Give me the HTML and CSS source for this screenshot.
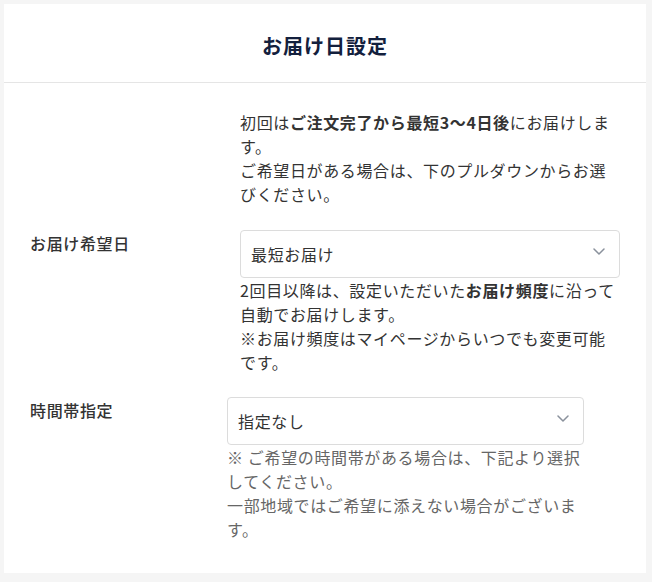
FILE: index.html
```html
<!DOCTYPE html>
<html lang="ja">
<head>
<meta charset="utf-8">
<title>お届け日設定</title>
<link rel="stylesheet" href="styles.css">
</head>
<body>
<div class="card">
  <header class="card-header">
    <h1 class="title">お届け日設定</h1>
  </header>
  <div class="card-body">
    <section class="field field-date">
      <p class="intro">初回は<strong>ご注文完了から最短3〜4日後</strong>にお届けします。<br>ご希望日がある場合は、下のプルダウンからお選びください。</p>
      <div class="label">お届け希望日</div>
      <div class="control">
        <div class="select">
          <span class="select-value">最短お届け</span>
          <svg class="chevron" width="12" height="7" viewBox="0 0 12 7"><polyline points="1,1 6,6 11,1" fill="none" stroke="#8a919c" stroke-width="1.5" stroke-linecap="round" stroke-linejoin="round"/></svg>
        </div>
        <p class="note">2回目以降は、設定いただいた<strong>お届け頻度</strong>に沿って自動でお届けします。<br>※お届け頻度はマイページからいつでも変更可能です。</p>
      </div>
    </section>
    <section class="field field-time">
      <div class="label">時間帯指定</div>
      <div class="control">
        <div class="select">
          <span class="select-value">指定なし</span>
          <svg class="chevron" width="12" height="7" viewBox="0 0 12 7"><polyline points="1,1 6,6 11,1" fill="none" stroke="#8a919c" stroke-width="1.5" stroke-linecap="round" stroke-linejoin="round"/></svg>
        </div>
        <p class="note note-muted">※ ご希望の時間帯がある場合は、下記より選択してください。<br>一部地域ではご希望に添えない場合がございます。</p>
      </div>
    </section>
  </div>
</div>
</body>
</html>
```

FILE: styles.css
```css
html, body {
  margin: 0;
}
body {
  background: #f5f5f5;
  padding: 4px 6px 8px 4px;
  font-family: "Noto Sans CJK JP", "Noto Sans", sans-serif;
  color: #333333;
  font-size: 16px;
  letter-spacing: 0.04em;
  line-height: 24px;
}
.card {
  background: #ffffff;
}
.card-header {
  padding: 27px 0 21px;
  border-bottom: 1px solid #e5e5e5;
  text-align: center;
}
.title {
  margin: 0;
  font-size: 20px;
  line-height: 30px;
  font-weight: 700;
  letter-spacing: 0.05em;
  color: #13203d;
}
.card-body {
  padding: 27px 0 32px 26px;
}
.field {
  display: grid;
}
.field-date {
  grid-template-columns: 210px 380px;
  grid-template-areas:
    ". intro"
    "label control";
  row-gap: 24px;
}
.field-time {
  grid-template-columns: 197px 357px;
  grid-template-areas: "label control";
  margin-top: 23px;
}
.intro {
  grid-area: intro;
  margin: 0;
}
.label {
  grid-area: label;
  padding-top: 1px;
  font-weight: 500;
  color: #333333;
}
.control {
  grid-area: control;
}
.select {
  box-sizing: border-box;
  height: 48px;
  border: 1px solid #dcdcdc;
  border-radius: 4px;
  padding: 0 14px 0 10px;
  display: flex;
  align-items: center;
  justify-content: space-between;
}
.chevron {
  margin-bottom: 6px;
}
.note {
  margin: 0;
}
.note-muted {
  color: #666666;
}
strong {
  font-weight: 700;
}
```
